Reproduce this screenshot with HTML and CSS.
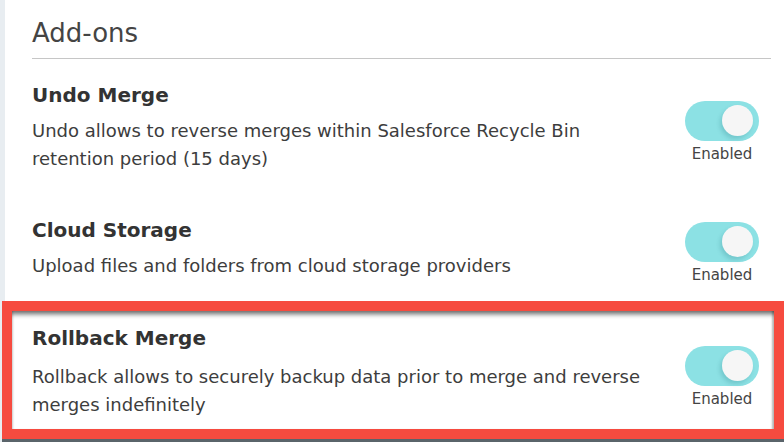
FILE: index.html
```html
<!DOCTYPE html>
<html lang="en">
<head>
<meta charset="utf-8">
<title>Add-ons</title>
<link rel="stylesheet" href="styles.css">
</head>
<body>
<div class="page">
  <div class="rail"></div>
  <main class="main">
    <h1 class="section-title">Add-ons</h1>
    <hr class="divider">

    <div class="addon addon-first">
      <div class="addon-text">
        <h2 class="addon-name">Undo Merge</h2>
        <p class="addon-desc">Undo allows to reverse merges within Salesforce Recycle Bin retention period (15 days)</p>
      </div>
      <div class="switch-wrap">
        <div class="switch"><span class="knob"></span></div>
        <span class="switch-label">Enabled</span>
      </div>
    </div>

    <div class="addon addon-second">
      <div class="addon-text">
        <h2 class="addon-name">Cloud Storage</h2>
        <p class="addon-desc">Upload files and folders from cloud storage providers</p>
      </div>
      <div class="switch-wrap">
        <div class="switch"><span class="knob"></span></div>
        <span class="switch-label">Enabled</span>
      </div>
    </div>

    <div class="highlight">
      <div class="addon">
        <div class="addon-text">
          <h2 class="addon-name">Rollback Merge</h2>
          <p class="addon-desc addon-desc-wide">Rollback allows to securely backup data prior to merge and reverse merges indefinitely</p>
        </div>
        <div class="switch-wrap">
          <div class="switch"><span class="knob"></span></div>
          <span class="switch-label">Enabled</span>
        </div>
      </div>
    </div>
  </main>
</div>
</body>
</html>
```

FILE: styles.css
```css
html, body {
  margin: 0;
  padding: 0;
  background: #ffffff;
}

body {
  font-family: "DejaVu Sans", "Liberation Sans", sans-serif;
  color: #333333;
}

.page {
  display: flex;
  width: 784px;
  height: 442px;
  overflow: hidden;
}

.rail {
  flex: none;
  width: 5px;
  background: #e8edf1;
}

.main {
  flex: 1;
  min-width: 0;
  padding: 17px 13px 0 27px;
}

.section-title {
  margin: 0;
  font-size: 26px;
  line-height: 32px;
  font-weight: normal;
  color: #444444;
}

.divider {
  margin: 9px 0 0 0;
  border: 0;
  height: 1px;
  background: #c6c6c6;
}

.addon {
  display: flex;
  align-items: center;
  justify-content: space-between;
  padding-right: 12px;
}

.addon-first {
  margin-top: 24px;
}

.addon-second {
  margin-top: 45px;
}

.addon-text {
  width: 616px;
}

.addon-name {
  margin: 0;
  font-size: 20px;
  line-height: 24px;
  font-weight: bold;
  color: #333333;
}

.addon-desc {
  margin: 10px 0 0 0;
  font-size: 18px;
  line-height: 28px;
  color: #3d3d3d;
}

.addon-desc-wide {
  margin-top: 13px;
}

.switch-wrap {
  display: flex;
  flex-direction: column;
  align-items: center;
  gap: 4px;
  margin: 4px 0 -4px 0;
}

.switch {
  position: relative;
  width: 74px;
  height: 40px;
  border-radius: 20px;
  background: #8ce1e4;
}

.knob {
  position: absolute;
  top: 4px;
  left: 37px;
  width: 31px;
  height: 31px;
  border-radius: 50%;
  background: #f6f6f6;
  box-shadow: -2px 3px 4px rgba(0, 90, 100, 0.18);
}

.switch-label {
  font-size: 15px;
  line-height: 18px;
  color: #444444;
}

.highlight {
  margin: 21px -13px 0 -30px;
  border: 10px solid #f64b3f;
  padding: 15px 3px 10px 20px;
  background: #ffffff;
  box-shadow:
    inset 0 6px 5px -3px rgba(0, 0, 0, 0.6),
    inset 3px 0 2px -2px rgba(0, 0, 0, 0.15),
    inset -3px 0 2px -1px rgba(0, 0, 0, 0.25),
    0 3px 0 #5a646a;
}

.highlight .addon {
  padding-right: 12px;
}
```
